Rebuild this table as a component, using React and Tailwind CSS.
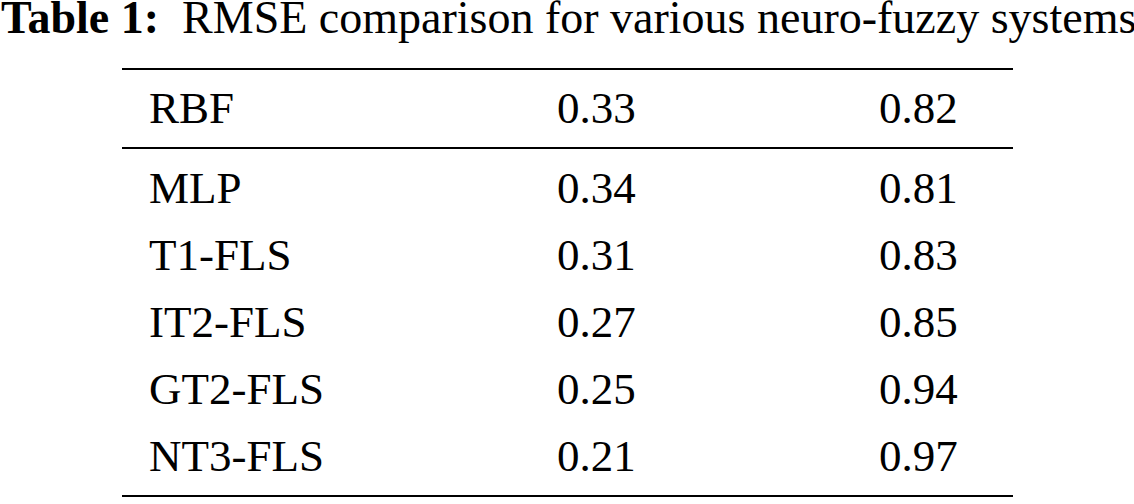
export default function App() {
  const rows = [
    ["MLP", "0.34", "0.81"],
    ["T1-FLS", "0.31", "0.83"],
    ["IT2-FLS", "0.27", "0.85"],
    ["GT2-FLS", "0.25", "0.94"],
    ["NT3-FLS", "0.21", "0.97"],
  ];
  return (
    <div className="w-[1134px] h-[504px] bg-white text-black font-['Liberation_Serif',serif] overflow-hidden">
      <div className="text-[46px] leading-[35px] whitespace-nowrap pl-[1px]">
        <span className="font-bold">Table 1:</span>
        <span>&nbsp; RMSE comparison for various neuro-fuzzy systems</span>
      </div>
      <div className="ml-[122px] w-[891px] mt-[33px] border-t-2 border-b-2 border-black text-[45px]">
        <div className="h-[79px] pt-[6px] leading-[64px] grid grid-cols-[435px_322px_1fr] border-b-2 border-black">
          <div className="pl-[27px]">RBF</div>
          <div>0.33</div>
          <div>0.82</div>
        </div>
        <div className="pt-[7px] pb-[4px]">
          {rows.map((r) => (
            <div key={r[0]} className="h-[67px] leading-[64px] grid grid-cols-[435px_322px_1fr]">
              <div className="pl-[27px]">{r[0]}</div>
              <div>{r[1]}</div>
              <div>{r[2]}</div>
            </div>
          ))}
        </div>
      </div>
    </div>
  );
}
